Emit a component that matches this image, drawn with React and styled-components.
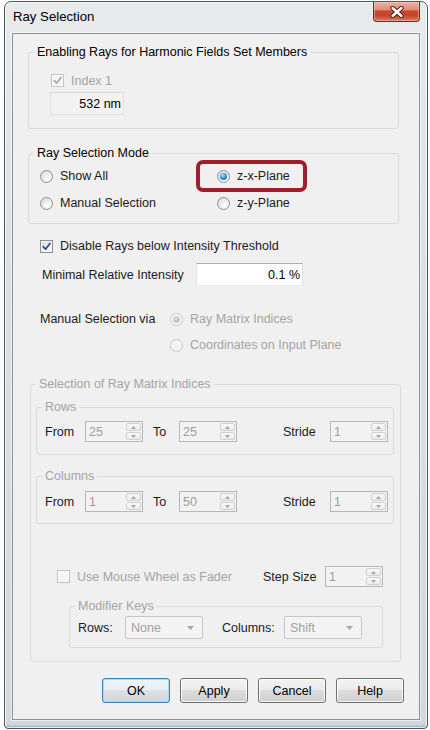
import React from 'react';
import styled, { createGlobalStyle, css } from 'styled-components';

const GlobalStyle = createGlobalStyle`
  html, body { margin: 0; padding: 0; background: #ffffff; }
  body { font-family: "Liberation Sans", Arial, sans-serif; font-size: 12.5px; color: #000; }
  *, *::before, *::after { box-sizing: border-box; }
`;

const Page = styled.div`
  padding: 1px 0 0 4px;
`;

const Window = styled.div`
  width: 424px;
  height: 728px;
  border: 1px solid #4f555b;
  border-radius: 7px 7px 4px 4px;
  background: linear-gradient(180deg, #e8eaec 0%, #dcdfe2 40%, #d3d8dc 100%);
  box-shadow: inset 0 0 0 1px rgba(255, 255, 255, 0.75), inset 0 -3px 2px -1px #7db8cd;
  padding: 0 7px 8px 7px;
  display: flex;
  flex-direction: column;
`;

const TitleBar = styled.div`
  height: 31px;
  display: flex;
  align-items: flex-start;
  justify-content: space-between;
`;

const Title = styled.span`
  margin: 7px 0 0 1px;
  font-size: 13.2px;
  line-height: 16px;
  color: #000;
`;

const CloseButton = styled.div`
  width: 47px;
  height: 20px;
  border: 1px solid #6e2a20;
  border-top: none;
  border-radius: 0 0 4px 4px;
  background: linear-gradient(180deg, #edb2a3 0%, #e08e78 40%, #c9472f 48%, #c4432d 70%, #dc7a60 100%);
  box-shadow: inset 0 0 0 1px rgba(255, 220, 210, 0.45);
  display: flex;
  align-items: center;
  justify-content: center;
`;

const Client = styled.div`
  flex: 1;
  background: #f0f0f0;
  border: 1px solid #8b9096;
  box-shadow: 0 0 0 1px rgba(255, 255, 255, 0.55);
  display: flex;
  flex-direction: column;
  padding-left: 15px;
`;

const Group = styled.fieldset`
  margin: ${p => p.$mt || 0}px 0 0 ${p => p.$ml || 0}px;
  padding: 0;
  width: ${p => p.$w}px;
  min-width: 0;
  border: 1px solid #d8dbdd;
  border-radius: 3px;
`;

const Legend = styled.legend`
  margin-left: 5px;
  padding: 0 3px;
  line-height: 15px;
  color: ${p => (p.$disabled ? '#a4a4a4' : '#000')};
`;

const GroupBody = styled.div`
  padding: ${p => p.$pt || 0}px 0 ${p => p.$pb || 0}px ${p => p.$pl || 0}px;
`;

const Row = styled.div`
  display: flex;
  align-items: center;
  height: ${p => p.$h || 20}px;
  margin: ${p => p.$mt || 0}px 0 0 ${p => p.$ml || 0}px;
  ${p => p.$end && css`justify-content: flex-end; padding-right: 15px;`}
  gap: ${p => p.$gap || 0}px;
`;

const Label = styled.span`
  color: ${p => (p.$disabled ? '#a4a4a4' : '#1a1a1a')};
  white-space: nowrap;
  ${p => p.$w && css`flex: 0 0 ${p.$w}px;`}
  ${p => p.$ml && css`margin-left: ${p.$ml}px;`}
`;

const Item = styled.span`
  display: inline-flex;
  align-items: center;
  gap: 7px;
  height: 20px;
  position: relative;
  justify-self: start;
  ${p => p.$w && css`flex: 0 0 ${p.$w}px;`}
  ${p => p.$highlight && css`
    &::before {
      content: '';
      position: absolute;
      left: -21px;
      top: -6px;
      width: 111px;
      height: 32px;
      border: 4px solid #a21d2b;
      border-radius: 7px;
    }
  `}
`;

const Box = styled.span`
  width: 13px;
  height: 13px;
  flex: 0 0 13px;
  border: 1px solid ${p => (p.$disabled ? '#c2c2c2' : '#8e8f8f')};
  background: ${p => (p.$disabled ? '#f5f5f5' : 'linear-gradient(135deg, #d6d9de 0%, #f1f2f4 60%, #ffffff 100%)')};
  box-shadow: inset 0 0 0 1px ${p => (p.$disabled ? '#fbfbfb' : '#f4f4f4')};
  display: inline-flex;
  align-items: center;
  justify-content: center;
`;

const Radio = styled.span`
  width: 13px;
  height: 13px;
  flex: 0 0 13px;
  border-radius: 50%;
  border: 1px solid ${p => (p.$disabled ? '#c8c8c8' : '#8e8f8f')};
  background: ${p => (p.$disabled ? '#f4f4f4' : 'radial-gradient(circle at 65% 70%, #ffffff 0%, #f0f0f0 35%, #d4d4d4 100%)')};
  display: inline-flex;
  align-items: center;
  justify-content: center;
  &::after {
    content: '';
    display: ${p => (p.$checked ? 'block' : 'none')};
    width: ${p => (p.$disabled ? 5 : 7)}px;
    height: ${p => (p.$disabled ? 5 : 7)}px;
    border-radius: 50%;
    background: ${p => (p.$disabled
      ? 'radial-gradient(circle at 40% 35%, #e6e6e6, #b4b4b4 70%)'
      : 'radial-gradient(circle at 40% 35%, #b7ecff 0%, #3a95d6 45%, #0f4f8f 100%)')};
    box-shadow: ${p => (p.$disabled ? '0 0 0 1px #d0d0d0' : 'none')};
  }
`;

const TextBox = styled.div`
  width: ${p => p.$w}px;
  height: 23px;
  margin-top: ${p => p.$mt || 0}px;
  margin-left: ${p => p.$ml || 0}px;
  border: 1px solid;
  border-color: ${p => (p.$readonly ? '#d6d6d6 #e2e2e2 #e6e6e6 #e2e2e2' : '#abadb3 #dbdfe6 #e3e9ef #e2e3ea')};
  background: ${p => (p.$readonly ? '#f2f2f2' : '#ffffff')};
  display: flex;
  align-items: center;
  justify-content: flex-end;
  padding-right: 2px;
  color: #000;
`;

const Spin = styled.div`
  width: 58px;
  height: 21px;
  flex: 0 0 58px;
  border: 1px solid #b6b6b6;
  background: #f2f2f2;
  display: flex;
  align-items: center;
  padding: 1px 1px 1px 3px;
  color: #9e9e9e;
`;

const SpinValue = styled.span`
  flex: 1;
`;

const SpinButtons = styled.div`
  width: 15px;
  height: 17px;
  display: flex;
  flex-direction: column;
  gap: 1px;
`;

const SpinBtn = styled.div`
  flex: 1;
  border: 1px solid #d0d0d0;
  border-radius: 2px;
  background: linear-gradient(#f8f8f8, #ececec);
  display: flex;
  align-items: center;
  justify-content: center;
`;

const Select = styled.div`
  width: 78px;
  height: 23px;
  flex: 0 0 78px;
  border: 1px solid #c6c6c6;
  border-radius: 2px;
  background: #f4f4f4;
  display: flex;
  align-items: center;
  justify-content: space-between;
  padding: 0 8px 0 5px;
  color: #a0a0a0;
`;

const Button = styled.button`
  width: 68px;
  height: 25px;
  padding: 0;
  font: inherit;
  color: #000;
  border: 1px solid ${p => (p.$default ? '#3c7fb1' : '#707070')};
  border-radius: 3px;
  background: ${p => (p.$default
    ? 'linear-gradient(180deg, #f1f5f8 0%, #e8eef2 49%, #dae1e6 50%, #cfd7dd 100%)'
    : 'linear-gradient(180deg, #f2f2f2 0%, #ebebeb 49%, #dddddd 50%, #cfcfcf 100%)')};
  box-shadow: inset 0 0 0 1px ${p => (p.$default ? '#a8dbf3' : 'rgba(255,255,255,0.85)')};
`;

const ModeGrid = styled.div`
  display: grid;
  grid-template-columns: 177px auto;
  grid-auto-rows: 20px;
  row-gap: 7px;
  align-items: center;
  padding: 5px 0 10px 11px;
`;

const Check = ({ disabled }) => (
  <svg width="9" height="9" viewBox="0 0 9 9">
    <path d="M1.2 4.6 L3.6 7.2 L7.9 1.4" fill="none" stroke={disabled ? '#a9a9a9' : '#2b4a8f'} strokeWidth="1.7" strokeLinecap="round" strokeLinejoin="round" />
  </svg>
);

const Tri = ({ down }) => (
  <svg width="5" height="3" viewBox="0 0 5 3">
    <path d={down ? 'M0 0 L5 0 L2.5 3 Z' : 'M0 3 L5 3 L2.5 0 Z'} fill="#a6a6a6" />
  </svg>
);

const Arrow = () => (
  <svg width="7" height="4" viewBox="0 0 7 4">
    <path d="M0 0 L7 0 L3.5 4 Z" fill="#a8a8a8" />
  </svg>
);

const SpinBox = ({ value }) => (
  <Spin>
    <SpinValue>{value}</SpinValue>
    <SpinButtons>
      <SpinBtn><Tri /></SpinBtn>
      <SpinBtn><Tri down /></SpinBtn>
    </SpinButtons>
  </Spin>
);

const IndexRow = ({ from, to }) => (
  <Row $h={21}>
    <Label $w={40}>From</Label>
    <SpinBox value={from} />
    <Label $w={26} $ml={10}>To</Label>
    <SpinBox value={to} />
    <Label $w={47} $ml={46}>Stride</Label>
    <SpinBox value="1" />
  </Row>
);

export default function App() {
  return (
    <Page>
      <GlobalStyle />
      <Window>
        <TitleBar>
          <Title>Ray Selection</Title>
          <CloseButton>
            <svg width="14" height="12" viewBox="0 0 14 12">
              <path d="M2.5 2 L11.5 10 M11.5 2 L2.5 10" stroke="#4a1d16" strokeWidth="4.4" strokeLinecap="round" />
              <path d="M2.5 2 L11.5 10 M11.5 2 L2.5 10" stroke="#ffffff" strokeWidth="2.4" strokeLinecap="round" />
            </svg>
          </CloseButton>
        </TitleBar>
        <Client>
          <Group $mt={11} $w={371}>
            <Legend>Enabling Rays for Harmonic Fields Set Members</Legend>
            <GroupBody $pt={12} $pb={13} $pl={22}>
              <Row $h={17}>
                <Item>
                  <Box $disabled><Check disabled /></Box>
                  <Label $disabled>Index 1</Label>
                </Item>
              </Row>
              <TextBox $w={74} $mt={3} $ml={-1} $readonly>532 nm</TextBox>
            </GroupBody>
          </Group>

          <Group $mt={17} $w={371}>
            <Legend>Ray Selection Mode</Legend>
            <ModeGrid>
              <Item><Radio /><Label>Show All</Label></Item>
              <Item $highlight><Radio $checked /><Label>z-x-Plane</Label></Item>
              <Item><Radio /><Label>Manual Selection</Label></Item>
              <Item><Radio /><Label>z-y-Plane</Label></Item>
            </ModeGrid>
          </Group>

          <Row $mt={12} $ml={12}>
            <Item>
              <Box><Check /></Box>
              <Label>Disable Rays below Intensity Threshold</Label>
            </Item>
          </Row>

          <Row $mt={7} $ml={14} $h={23}>
            <Label $w={154}>Minimal Relative Intensity</Label>
            <TextBox $w={107}>0.1 %</TextBox>
          </Row>

          <Row $mt={23} $ml={12}>
            <Label $w={130}>Manual Selection via</Label>
            <Item><Radio $disabled $checked /><Label $disabled>Ray Matrix Indices</Label></Item>
          </Row>
          <Row $mt={6} $ml={142}>
            <Item><Radio $disabled /><Label $disabled>Coordinates on Input Plane</Label></Item>
          </Row>

          <Group $mt={22} $ml={2} $w={371}>
            <Legend $disabled>Selection of Ray Matrix Indices</Legend>
            <GroupBody $pt={8} $pb={13} $pl={5}>
              <Group $w={358}>
                <Legend $disabled>Rows</Legend>
                <GroupBody $pt={6} $pb={12} $pl={8}>
                  <IndexRow from="25" to="25" />
                </GroupBody>
              </Group>
              <Group $mt={14} $w={358}>
                <Legend $disabled>Columns</Legend>
                <GroupBody $pt={7} $pb={11} $pl={8}>
                  <IndexRow from="1" to="50" />
                </GroupBody>
              </Group>

              <Row $mt={42} $ml={21} $h={21}>
                <Item $w={206}>
                  <Box $disabled />
                  <Label $disabled>Use Mouse Wheel as Fader</Label>
                </Item>
                <Label $w={62}>Step Size</Label>
                <SpinBox value="1" />
              </Row>

              <Group $mt={12} $ml={33} $w={314}>
                <Legend $disabled>Modifier Keys</Legend>
                <GroupBody $pt={2} $pb={8} $pl={8}>
                  <Row $h={23}>
                    <Label $w={47}>Rows:</Label>
                    <Select><span>None</span><Arrow /></Select>
                    <Label $w={62} $ml={19}>Columns:</Label>
                    <Select><span>Shift</span><Arrow /></Select>
                  </Row>
                </GroupBody>
              </Group>
            </GroupBody>
          </Group>

          <Row $mt={16} $h={25} $gap={10} $end>
            <Button $default>OK</Button>
            <Button>Apply</Button>
            <Button>Cancel</Button>
            <Button>Help</Button>
          </Row>
        </Client>
      </Window>
    </Page>
  );
}
